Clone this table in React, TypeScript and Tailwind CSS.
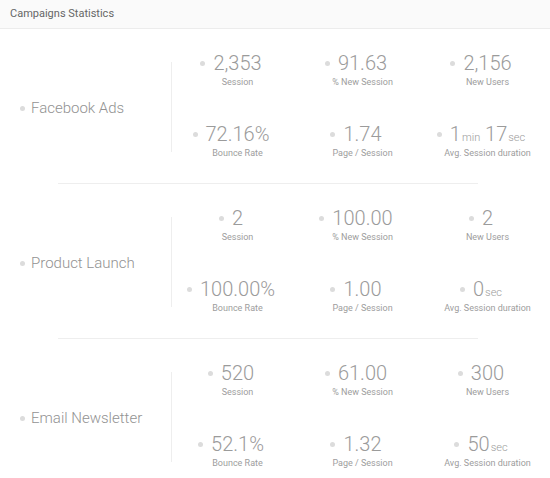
import { ReactNode } from "react";

interface IStat {
  value: ReactNode;
  label: string;
}

interface ICampaign {
  name: string;
  stats: IStat[];
}

const Small = ({ children }: { children: ReactNode }) => (
  <span className="text-[11px] leading-none ml-[1px]">{children}</span>
);

const campaigns: ICampaign[] = [
  {
    name: "Facebook Ads",
    stats: [
      { value: "2,353", label: "Session" },
      { value: "91.63", label: "% New Session" },
      { value: "2,156", label: "New Users" },
      { value: "72.16%", label: "Bounce Rate" },
      { value: "1.74", label: "Page / Session" },
      {
        value: (
          <>
            1<Small>min</Small> 17<Small>sec</Small>
          </>
        ),
        label: "Avg. Session duration",
      },
    ],
  },
  {
    name: "Product Launch",
    stats: [
      { value: "2", label: "Session" },
      { value: "100.00", label: "% New Session" },
      { value: "2", label: "New Users" },
      { value: "100.00%", label: "Bounce Rate" },
      { value: "1.00", label: "Page / Session" },
      {
        value: (
          <>
            0<Small>sec</Small>
          </>
        ),
        label: "Avg. Session duration",
      },
    ],
  },
  {
    name: "Email Newsletter",
    stats: [
      { value: "520", label: "Session" },
      { value: "61.00", label: "% New Session" },
      { value: "300", label: "New Users" },
      { value: "52.1%", label: "Bounce Rate" },
      { value: "1.32", label: "Page / Session" },
      {
        value: (
          <>
            50<Small>sec</Small>
          </>
        ),
        label: "Avg. Session duration",
      },
    ],
  },
];

function Stat({ stat }: { stat: IStat }) {
  return (
    <div className="flex flex-col items-center">
      <div className="relative text-[20px] leading-[24px] font-light text-[#9b9b9b]">
        <span className="absolute left-[-13px] top-[10px] w-[5px] h-[5px] rounded-full bg-[#dcdcdc]" />
        {stat.value}
      </div>
      <div className="text-[9px] leading-[14px] text-[#9d9d9d]">{stat.label}</div>
    </div>
  );
}

function CampaignRow({ campaign }: { campaign: ICampaign }) {
  return (
    <div className="flex pt-[22px] pb-[23px]">
      <div className="w-[171px] flex items-center pl-[20px] pt-[6px] gap-[6px]">
        <span className="w-[5px] h-[5px] rounded-full bg-[#dcdcdc]" />
        <span className="text-[15px] font-light text-[#929292]">{campaign.name}</span>
      </div>
      <div className="w-px h-[90px] mt-[3px] bg-[#eeeeee] self-center" />
      <div className="ml-[3px] grid grid-cols-[125px_125px_125px] gap-y-[33px]">
        {campaign.stats.map((s, i) => (
          <Stat key={i} stat={s} />
        ))}
      </div>
    </div>
  );
}

export default function App() {
  return (
    <div className="w-[550px] h-[478px] bg-white font-['Roboto',sans-serif] overflow-hidden">
      <div className="h-[29px] bg-[#fafafa] border-b border-[#ececec] px-[10px] flex items-center text-[11px] text-[#666]">
        Campaigns Statistics
      </div>
      {campaigns.map((c, i) => (
        <div key={c.name}>
          <CampaignRow campaign={c} />
          {i < campaigns.length - 1 && <div className="ml-[58px] mr-[72px] h-px bg-[#eeeeee]" />}
        </div>
      ))}
    </div>
  );
}
